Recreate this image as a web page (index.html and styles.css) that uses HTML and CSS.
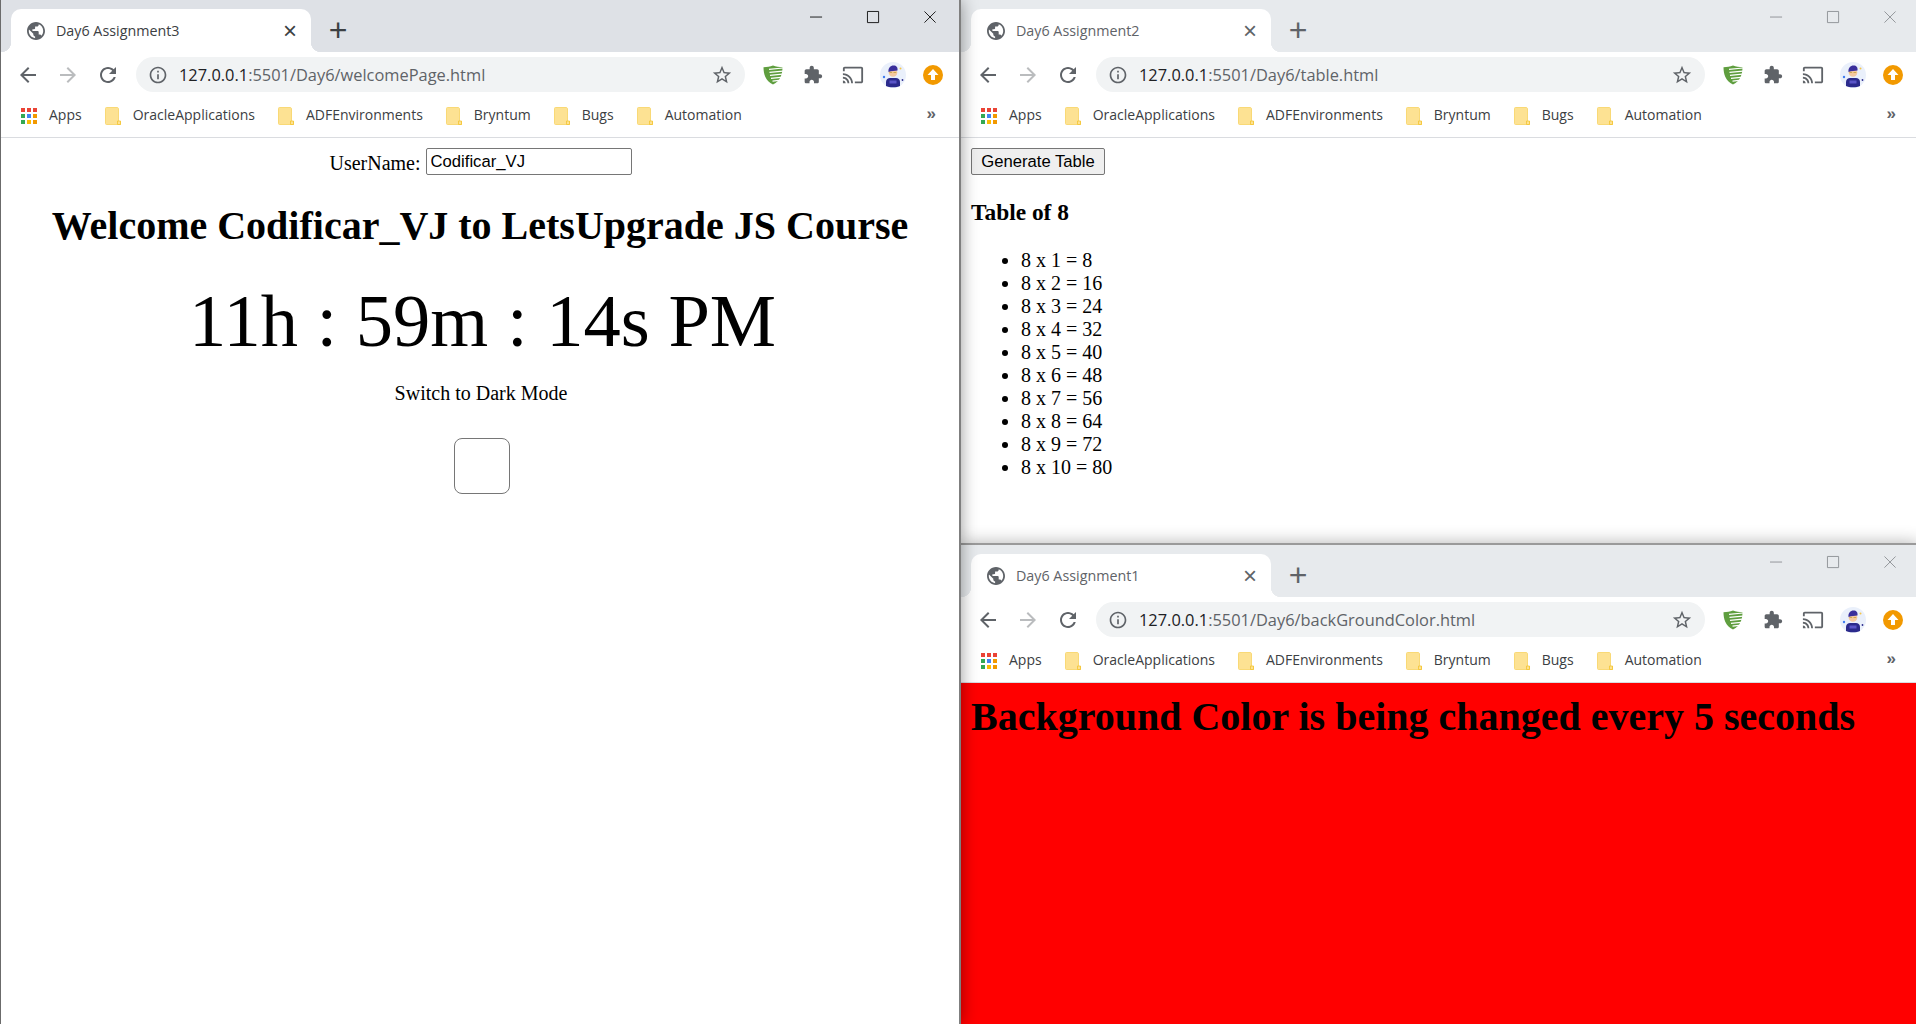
FILE: index.html
```html
<!DOCTYPE html>
<html lang="en">
<head>
    <meta charset="UTF-8">
    <title>Day6 Assignments</title>
    <link rel="stylesheet" href="styles.css">
</head>
<body>
    <svg class="sprite" width="0" height="0">
        <symbol id="i-globe" viewBox="2 2 20 20"><path d="M12 2C6.48 2 2 6.48 2 12s4.48 10 10 10 10-4.48 10-10S17.52 2 12 2zm-1 17.93c-3.95-.49-7-3.85-7-7.93 0-.62.08-1.21.21-1.79L9 15v1c0 1.1.9 2 2 2v1.93zm6.9-2.54c-.26-.81-1-1.39-1.9-1.39h-1v-3c0-.55-.45-1-1-1H8v-2h2c.55 0 1-.45 1-1V7h2c1.1 0 2-.9 2-2v-.41c2.93 1.19 5 4.06 5 7.41 0 2.08-.8 3.97-2.1 5.39z"/></symbol>
        <symbol id="i-back" viewBox="0 0 24 24"><path d="M20 11H7.83l5.59-5.59L12 4l-8 8 8 8 1.41-1.41L7.83 13H20v-2z"/></symbol>
        <symbol id="i-forward" viewBox="0 0 24 24"><path d="M4 11h12.17l-5.59-5.59L12 4l8 8-8 8-1.41-1.41L16.17 13H4v-2z"/></symbol>
        <symbol id="i-reload" viewBox="0 0 24 24"><path d="M17.65 6.35C16.2 4.9 14.21 4 12 4c-4.42 0-7.99 3.58-7.99 8s3.57 8 7.99 8c3.73 0 6.84-2.55 7.73-6h-2.08c-.82 2.33-3.04 4-5.65 4-3.31 0-6-2.69-6-6s2.69-6 6-6c1.66 0 3.14.69 4.22 1.78L13 11h7V4l-2.35 2.35z"/></symbol>
        <symbol id="i-info" viewBox="0 0 24 24"><path d="M11 7h2v2h-2zm0 4h2v6h-2zm1-9C6.48 2 2 6.48 2 12s4.48 10 10 10 10-4.48 10-10S17.52 2 12 2zm0 18c-4.41 0-8-3.59-8-8s3.59-8 8-8 8 3.59 8 8-3.59 8-8 8z"/></symbol>
        <symbol id="i-star" viewBox="0 0 24 24"><path d="M22 9.24l-7.19-.62L12 2 9.19 8.63 2 9.24l5.46 4.73L5.82 21 12 17.27 18.18 21l-1.63-7.03L22 9.24zM12 15.4l-3.76 2.27 1-4.28-3.32-2.88 4.38-.38L12 6.1l1.71 4.04 4.38.38-3.32 2.88 1 4.28L12 15.4z"/></symbol>
        <symbol id="i-puzzle" viewBox="0 0 24 24"><path d="M20.5 11H19V7c0-1.1-.9-2-2-2h-4V3.5C13 2.12 11.88 1 10.5 1S8 2.12 8 3.5V5H4c-1.1 0-1.99.9-1.99 2v3.8H3.5c1.49 0 2.7 1.21 2.7 2.7s-1.21 2.7-2.7 2.7H2V20c0 1.1.9 2 2 2h3.8v-1.5c0-1.49 1.21-2.7 2.7-2.7 1.49 0 2.7 1.21 2.7 2.7V22H17c1.1 0 2-.9 2-2v-4h1.5c1.38 0 2.5-1.12 2.5-2.5S21.88 11 20.5 11z"/></symbol>
        <symbol id="i-cast" viewBox="0 0 24 24"><path d="M21 3H3c-1.1 0-2 .9-2 2v3h2V5h18v14h-7v2h7c1.1 0 2-.9 2-2V5c0-1.1-.9-2-2-2zM1 18v3h3c0-1.66-1.34-3-3-3zm0-4v2c2.76 0 5 2.24 5 5h2c0-3.87-3.13-7-7-7zm0-4v2c4.97 0 9 4.03 9 9h2c0-6.08-4.93-11-11-11z"/></symbol>
        <symbol id="i-shield" viewBox="0 0 20 20">
            <path fill="#5f9e3f" d="M10 .5C7 1.6 4 2 .5 2.200c0 7 1.900 13.400 9.500 17.300 7.600-3.900 9.500-10.300 9.500-17.300C16 2 13 1.600 10 .5z"/>
            <path fill="none" stroke="#fff" stroke-width="1.200" d="M6 4.300l14-1.300M6.500 7.300l13.500-1.200M7 10.300l12.500-1.100M8 13.300l10-1M9.500 16.200l6.500-.8"/>
        </symbol>
        <symbol id="i-avatar" viewBox="0 0 26 26">
            <circle cx="13" cy="13" r="13" fill="#eaf0fb"/>
            <path fill="#2b2a8c" d="M6 24v-4c0-2.500 2-4 4-4h6c2 0 4 1.500 4 4v4c-3 1.800-11 1.800-14 0z"/>
            <rect x="9.500" y="18.500" width="7" height="3" fill="#5a55c8"/>
            <circle cx="13" cy="10.500" r="4.300" fill="#f5c9a0"/>
            <path fill="#3a2f9c" d="M8.500 10c-.5-4 2-6.500 5-6.500s4.500 2 4 5c-3 .5-6 .2-9 1.500z"/>
            <path fill="none" stroke="#c8a23a" stroke-width=".8" d="M9.500 10.500h2.600m1.400 0h2.700"/>
            <circle cx="4" cy="15" r="1.200" fill="#3f7df0"/>
            <circle cx="20.500" cy="6.500" r="1" fill="#f6c445"/>
            <circle cx="22.500" cy="18" r=".9" fill="#2b2a8c"/>
        </symbol>
        <symbol id="i-update" viewBox="0 0 20 20">
            <circle cx="10" cy="10" r="10" fill="#f29900"/>
            <path fill="#fff" d="M10 4l5.500 6H12v5H8v-5H4.500z"/>
        </symbol>
        <symbol id="i-apps" viewBox="0 0 16 16">
            <rect width="4" height="4" fill="#ea4335"/><rect x="6" width="4" height="4" fill="#ea4335"/><rect x="12" width="4" height="4" fill="#ea4335"/>
            <rect y="6" width="4" height="4" fill="#34a853"/><rect x="6" y="6" width="4" height="4" fill="#4285f4"/><rect x="12" y="6" width="4" height="4" fill="#f29900"/>
            <rect y="12" width="4" height="4" fill="#34a853"/><rect x="6" y="12" width="4" height="4" fill="#fbbc04"/><rect x="12" y="12" width="4" height="4" fill="#f29900"/>
        </symbol>
        <symbol id="i-folder" viewBox="0 0 16 18">
            <path fill="#fde293" stroke="#f9d976" d="M1.500.5h10.500c1 0 1.500.5 1.500 1.500v12.500h2v3H1.500c-.6 0-1-.4-1-1V1.500c0-.6.4-1 1-1z"/>
            <path fill="#fde293" stroke="#f4c430" stroke-width=".8" d="M12.500 14h3v3.500h-3z"/>
        </symbol>
    </svg>

    <div class="desktop">
        <!-- welcome page -->
        <section class="window window-main">
            <div class="tabstrip">
                <div class="tab">
                    <svg class="favicon"><use href="#i-globe"/></svg>
                    <span class="tab-title">Day6 Assignment3</span>
                    <span class="tab-close">&times;</span>
                </div>
                <span class="new-tab">+</span>
                <div class="controls">
                    <svg class="ctl" viewBox="0 0 14 14"><path d="M0 6.500h13"/></svg>
                    <svg class="ctl" viewBox="0 0 14 14"><path d="M.5.500h12v12h-12z"/></svg>
                    <svg class="ctl" viewBox="0 0 14 14"><path d="M.5.500l12 12m0-12l-12 12"/></svg>
                </div>
            </div>
            <div class="toolbar">
                <svg class="nav"><use href="#i-back"/></svg>
                <svg class="nav nav-off"><use href="#i-forward"/></svg>
                <svg class="nav"><use href="#i-reload"/></svg>
                <div class="omnibox">
                    <svg class="info"><use href="#i-info"/></svg>
                    <span class="url"><b>127.0.0.1</b>:5501/Day6/welcomePage.html</span>
                    <svg class="star"><use href="#i-star"/></svg>
                </div>
                <div class="actions">
                    <svg class="ext-shield"><use href="#i-shield"/></svg>
                    <svg class="ext-puzzle"><use href="#i-puzzle"/></svg>
                    <svg class="ext-cast"><use href="#i-cast"/></svg>
                    <svg class="ext-avatar"><use href="#i-avatar"/></svg>
                    <svg class="ext-update"><use href="#i-update"/></svg>
                </div>
            </div>
            <div class="bookmarks">
                <span class="mark"><svg class="apps"><use href="#i-apps"/></svg>Apps</span>
                <span class="mark"><svg class="folder"><use href="#i-folder"/></svg>OracleApplications</span>
                <span class="mark"><svg class="folder"><use href="#i-folder"/></svg>ADFEnvironments</span>
                <span class="mark"><svg class="folder"><use href="#i-folder"/></svg>Bryntum</span>
                <span class="mark"><svg class="folder"><use href="#i-folder"/></svg>Bugs</span>
                <span class="mark"><svg class="folder"><use href="#i-folder"/></svg>Automation</span>
                <span class="more">&raquo;</span>
            </div>
            <main class="page page-welcome">
                <div class="user-row">
                    <label for="username">UserName:</label>
                    <input id="username" type="text" value="Codificar_VJ">
                </div>
                <h1 class="welcome">Welcome Codificar_VJ to LetsUpgrade JS Course</h1>
                <div class="clock">11h : 59m : 14s PM</div>
                <p class="switch-label">Switch to Dark Mode</p>
                <input class="dark-check" type="checkbox">
            </main>
        </section>

        <!-- table page -->
        <section class="window window-inactive">
            <div class="tabstrip">
                <div class="tab">
                    <svg class="favicon"><use href="#i-globe"/></svg>
                    <span class="tab-title">Day6 Assignment2</span>
                    <span class="tab-close">&times;</span>
                </div>
                <span class="new-tab">+</span>
                <div class="controls">
                    <svg class="ctl" viewBox="0 0 14 14"><path d="M0 6.500h13"/></svg>
                    <svg class="ctl" viewBox="0 0 14 14"><path d="M.5.500h12v12h-12z"/></svg>
                    <svg class="ctl" viewBox="0 0 14 14"><path d="M.5.500l12 12m0-12l-12 12"/></svg>
                </div>
            </div>
            <div class="toolbar">
                <svg class="nav"><use href="#i-back"/></svg>
                <svg class="nav nav-off"><use href="#i-forward"/></svg>
                <svg class="nav"><use href="#i-reload"/></svg>
                <div class="omnibox">
                    <svg class="info"><use href="#i-info"/></svg>
                    <span class="url"><b>127.0.0.1</b>:5501/Day6/table.html</span>
                    <svg class="star"><use href="#i-star"/></svg>
                </div>
                <div class="actions">
                    <svg class="ext-shield"><use href="#i-shield"/></svg>
                    <svg class="ext-puzzle"><use href="#i-puzzle"/></svg>
                    <svg class="ext-cast"><use href="#i-cast"/></svg>
                    <svg class="ext-avatar"><use href="#i-avatar"/></svg>
                    <svg class="ext-update"><use href="#i-update"/></svg>
                </div>
            </div>
            <div class="bookmarks">
                <span class="mark"><svg class="apps"><use href="#i-apps"/></svg>Apps</span>
                <span class="mark"><svg class="folder"><use href="#i-folder"/></svg>OracleApplications</span>
                <span class="mark"><svg class="folder"><use href="#i-folder"/></svg>ADFEnvironments</span>
                <span class="mark"><svg class="folder"><use href="#i-folder"/></svg>Bryntum</span>
                <span class="mark"><svg class="folder"><use href="#i-folder"/></svg>Bugs</span>
                <span class="mark"><svg class="folder"><use href="#i-folder"/></svg>Automation</span>
                <span class="more">&raquo;</span>
            </div>
            <main class="page page-table">
                <button class="gen-btn">Generate Table</button>
                <h3 class="table-title">Table of 8</h3>
                <ul class="table-list">
                    <li>8 x 1 = 8</li>
                    <li>8 x 2 = 16</li>
                    <li>8 x 3 = 24</li>
                    <li>8 x 4 = 32</li>
                    <li>8 x 5 = 40</li>
                    <li>8 x 6 = 48</li>
                    <li>8 x 7 = 56</li>
                    <li>8 x 8 = 64</li>
                    <li>8 x 9 = 72</li>
                    <li>8 x 10 = 80</li>
                </ul>
            </main>
        </section>

        <!-- background colour page -->
        <section class="window window-inactive window-bottom">
            <div class="tabstrip">
                <div class="tab">
                    <svg class="favicon"><use href="#i-globe"/></svg>
                    <span class="tab-title">Day6 Assignment1</span>
                    <span class="tab-close">&times;</span>
                </div>
                <span class="new-tab">+</span>
                <div class="controls">
                    <svg class="ctl" viewBox="0 0 14 14"><path d="M0 6.500h13"/></svg>
                    <svg class="ctl" viewBox="0 0 14 14"><path d="M.5.500h12v12h-12z"/></svg>
                    <svg class="ctl" viewBox="0 0 14 14"><path d="M.5.500l12 12m0-12l-12 12"/></svg>
                </div>
            </div>
            <div class="toolbar">
                <svg class="nav"><use href="#i-back"/></svg>
                <svg class="nav nav-off"><use href="#i-forward"/></svg>
                <svg class="nav"><use href="#i-reload"/></svg>
                <div class="omnibox">
                    <svg class="info"><use href="#i-info"/></svg>
                    <span class="url"><b>127.0.0.1</b>:5501/Day6/backGroundColor.html</span>
                    <svg class="star"><use href="#i-star"/></svg>
                </div>
                <div class="actions">
                    <svg class="ext-shield"><use href="#i-shield"/></svg>
                    <svg class="ext-puzzle"><use href="#i-puzzle"/></svg>
                    <svg class="ext-cast"><use href="#i-cast"/></svg>
                    <svg class="ext-avatar"><use href="#i-avatar"/></svg>
                    <svg class="ext-update"><use href="#i-update"/></svg>
                </div>
            </div>
            <div class="bookmarks">
                <span class="mark"><svg class="apps"><use href="#i-apps"/></svg>Apps</span>
                <span class="mark"><svg class="folder"><use href="#i-folder"/></svg>OracleApplications</span>
                <span class="mark"><svg class="folder"><use href="#i-folder"/></svg>ADFEnvironments</span>
                <span class="mark"><svg class="folder"><use href="#i-folder"/></svg>Bryntum</span>
                <span class="mark"><svg class="folder"><use href="#i-folder"/></svg>Bugs</span>
                <span class="mark"><svg class="folder"><use href="#i-folder"/></svg>Automation</span>
                <span class="more">&raquo;</span>
            </div>
            <main class="page page-red">
                <h1 class="red-title">Background Color is being changed every 5 seconds</h1>
            </main>
        </section>
    </div>
</body>
</html>
```

FILE: styles.css
```css
html, body {
    margin: 0;
    height: 100%;
    overflow: hidden;
    background: #fff;
}
.sprite {
    display: block;
    height: 0;
}
.desktop {
    display: grid;
    grid-template-columns: 961px 958px;
    grid-template-rows: 543px 481px;
    height: 1024px;
    width: 1919px;
}

/* windows */
.window {
    display: flex;
    flex-direction: column;
    min-width: 0;
    position: relative;
    background: #fff;
}
.window-main {
    grid-row: 1 / 3;
    z-index: 3;
    border-left: 1px solid #6b6b6b;
    border-right: 2px solid #7f7f7f;
    box-shadow: 0 0 16px rgba(0,0,0,.4);
}
.window-bottom {
    z-index: 2;
    border-top: 2px solid #9a9a9a;
    box-shadow: 0 0 16px rgba(0,0,0,.3);
}

/* tab strip */
.tabstrip {
    display: flex;
    align-items: flex-start;
    height: 52px;
    flex: none;
    padding-top: 9px;
    box-sizing: border-box;
    background: #dee1e6;
}
.window-inactive .tabstrip {
    background: #e7eaed;
}
.tab {
    display: flex;
    align-items: center;
    position: relative;
    width: 300px;
    height: 43px;
    margin-left: 10px;
    padding: 0 14px 0 16px;
    box-sizing: border-box;
    background: #fff;
    border-radius: 10px 10px 0 0;
}
.tab::before, .tab::after {
    content: '';
    position: absolute;
    bottom: 0;
    width: 10px;
    height: 10px;
}
.tab::before {
    left: -10px;
    background: radial-gradient(circle at 0 0, transparent 10px, #fff 10.5px);
}
.tab::after {
    right: -10px;
    background: radial-gradient(circle at 100% 0, transparent 10px, #fff 10.5px);
}
.favicon {
    width: 18px;
    height: 18px;
    flex: none;
    fill: #5f6368;
}
.tab-title {
    margin-left: 11px;
    flex: 1;
    font: 14.300px "Open Sans", sans-serif;
    color: #3c4043;
    white-space: nowrap;
}
.window-inactive .tab-title {
    color: #5f6368;
}
.tab-close {
    font: 24px "Liberation Sans", sans-serif;
    line-height: 24px;
    color: #3c4043;
}
.window-inactive .tab-close {
    color: #5f6368;
}
.new-tab {
    width: 28px;
    margin: 1px 0 0 13px;
    text-align: center;
    font: 32px/40px "Liberation Sans", sans-serif;
    color: #3c4043;
}
.window-inactive .new-tab {
    color: #5f6368;
}
.controls {
    display: flex;
    margin: -9px 0 0 auto;
}
.ctl {
    width: 13px;
    height: 13px;
    padding: 11px 22px 10px;
    flex: none;
    fill: none;
    stroke: #111;
    stroke-width: 1;
    overflow: visible;
}
.window-inactive .ctl {
    stroke: #8e9195;
}

/* toolbar */
.toolbar {
    display: flex;
    align-items: center;
    height: 45px;
    flex: none;
    padding: 0 6px 0 7px;
    box-sizing: border-box;
}
.nav {
    width: 24px;
    height: 24px;
    padding: 0 8px;
    flex: none;
    fill: #5f6368;
}
.nav-off {
    fill: #babcbe;
}
.omnibox {
    display: flex;
    align-items: center;
    flex: 1;
    height: 35px;
    margin-left: 8px;
    padding: 0 12px 0 12px;
    border-radius: 18px;
    background: #f1f3f4;
}
.info {
    width: 20px;
    height: 20px;
    flex: none;
    fill: #5f6368;
}
.url {
    flex: 1;
    margin-left: 11px;
    font: 16.400px "Open Sans", sans-serif;
    color: #5f6368;
    white-space: nowrap;
}
.url b {
    font-weight: normal;
    color: #202124;
}
.star {
    width: 22px;
    height: 22px;
    flex: none;
    fill: #5f6368;
}
.actions {
    display: flex;
    align-items: center;
    margin-left: 8px;
}
.actions svg {
    padding: 0 10px;
    width: 20px;
    height: 20px;
    flex: none;
    fill: #5f6368;
}
.actions .ext-cast {
    width: 22px;
    height: 22px;
    padding: 0 9px;
}
.actions .ext-avatar {
    width: 26px;
    height: 26px;
    padding: 0 7px;
}

/* bookmarks */
.bookmarks {
    display: flex;
    align-items: center;
    gap: 23px;
    height: 41px;
    flex: none;
    padding: 0 23px 5px 20px;
    box-sizing: border-box;
    border-bottom: 1px solid #dadce0;
}
.mark {
    display: flex;
    align-items: center;
    gap: 12px;
    font: 14px "Open Sans", sans-serif;
    color: #3c4043;
    white-space: nowrap;
}
.apps {
    width: 16px;
    height: 16px;
    margin-top: 2px;
    flex: none;
}
.folder {
    width: 16px;
    height: 18px;
    margin-top: 2px;
    flex: none;
}
.more {
    margin-left: auto;
    padding-bottom: 2px;
    font: bold 17px "Liberation Sans", sans-serif;
    color: #5f6368;
}

/* pages */
.page {
    flex: 1;
    font: 20px "Liberation Serif", serif;
    color: #000;
    padding: 10px;
}
.page-welcome {
    text-align: center;
}
.user-row {
    padding-left: 1px;
}
.user-row input {
    width: 206px;
    height: 27px;
    padding: 1px 4px;
    box-sizing: border-box;
    border: 1px solid #767676;
    border-radius: 2px;
    font: 16.670px "Liberation Sans", sans-serif;
    vertical-align: bottom;
}
.welcome {
    margin: 27px 0 0;
    font-size: 40px;
}
.clock {
    margin: 30px 0 0 5px;
    font-size: 74.500px;
}
.switch-label {
    margin: 18px 0 0 2px;
}
.dark-check {
    display: block;
    appearance: none;
    width: 56px;
    height: 56px;
    margin: 33px 0 0 calc(50% - 26px);
    border: 1px solid #767676;
    border-radius: 8px;
    background: #fff;
}
.gen-btn {
    display: block;
    width: 134px;
    height: 27px;
    padding: 0;
    border: 1px solid #767676;
    border-radius: 2px;
    background: #efefef;
    font: 16.670px "Liberation Sans", sans-serif;
    color: #000;
}
.table-title {
    margin: 24px 0 0;
    font-size: 23.400px;
}
.table-list {
    margin: 23px 0 0;
    padding-left: 50px;
}
.page-red {
    background: #f00;
}
.red-title {
    margin: 0;
    font-size: 40px;
}
```
